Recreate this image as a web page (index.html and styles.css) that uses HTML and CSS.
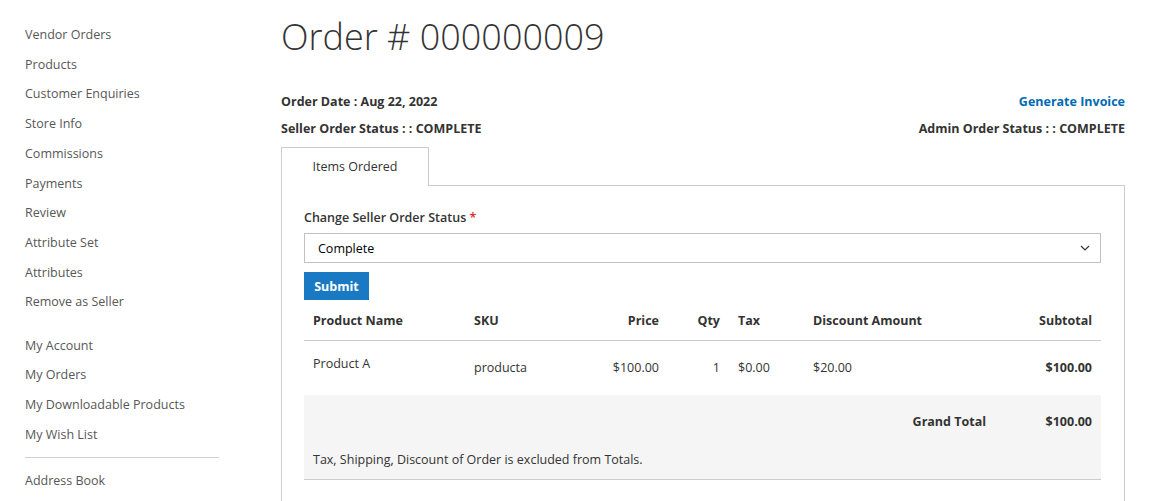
FILE: index.html
```html
<!DOCTYPE html>
<html>
<head>
<meta charset="utf-8">
<link rel="stylesheet" href="styles.css">
</head>
<body>
<div class="page">
  <aside class="sidebar">
    <ul class="nav">
      <li>Vendor Orders</li>
      <li>Products</li>
      <li>Customer Enquiries</li>
      <li>Store Info</li>
      <li>Commissions</li>
      <li>Payments</li>
      <li>Review</li>
      <li>Attribute Set</li>
      <li>Attributes</li>
      <li>Remove as Seller</li>
    </ul>
    <ul class="nav nav-second">
      <li>My Account</li>
      <li>My Orders</li>
      <li>My Downloadable Products</li>
      <li>My Wish List</li>
    </ul>
    <div class="nav-divider"></div>
    <ul class="nav nav-third">
      <li>Address Book</li>
    </ul>
  </aside>
  <main class="main">
    <h1 class="title">Order # 000000009</h1>
    <div class="meta">
      <div class="meta-row">
        <span class="meta-text">Order Date : Aug 22, 2022</span>
        <a class="invoice-link">Generate Invoice</a>
      </div>
      <div class="meta-row">
        <span class="meta-text">Seller Order Status : : COMPLETE</span>
        <span class="meta-text">Admin Order Status : : COMPLETE</span>
      </div>
    </div>
    <div class="tabs">
      <div class="tab">Items Ordered</div>
    </div>
    <div class="tab-content">
      <div class="field-label">Change Seller Order Status <span class="req">*</span></div>
      <div class="select">
        <span>Complete</span>
        <svg class="chev" width="10" height="6" viewBox="0 0 10 6"><path d="M1 1 L5 5 L9 1" fill="none" stroke="#333" stroke-width="1.2"/></svg>
      </div>
      <button class="submit">Submit</button>
      <table class="items">
        <colgroup>
          <col class="c1"><col class="c2"><col class="c3"><col class="c4"><col class="c5"><col class="c6"><col class="c7">
        </colgroup>
        <thead>
          <tr>
            <th>Product Name</th>
            <th>SKU</th>
            <th class="r">Price</th>
            <th class="r">Qty</th>
            <th>Tax</th>
            <th>Discount Amount</th>
            <th class="r">Subtotal</th>
          </tr>
        </thead>
        <tbody>
          <tr>
            <td class="pname">Product A</td>
            <td>producta</td>
            <td class="r">$100.00</td>
            <td class="r">1</td>
            <td>$0.00</td>
            <td>$20.00</td>
            <td class="r b">$100.00</td>
          </tr>
        </tbody>
        <tfoot>
          <tr class="grand">
            <td colspan="6" class="r b">Grand Total</td>
            <td class="r b">$100.00</td>
          </tr>
          <tr class="note">
            <td colspan="7">Tax, Shipping, Discount of Order is excluded from Totals.</td>
          </tr>
        </tfoot>
      </table>
    </div>
  </main>
</div>
</body>
</html>
```
FILE: styles.css
```css
html, body {
  margin: 0;
  padding: 0;
  background: #fff;
}
body {
  font-family: "Open Sans", "Liberation Sans", sans-serif;
  font-size: 12.5px;
  color: #333;
}
.page {
  display: flex;
  align-items: flex-start;
}
.sidebar {
  width: 281px;
  padding: 20px 0 0 25px;
  box-sizing: border-box;
  flex: none;
}
.nav {
  list-style: none;
  margin: 0;
  padding: 0;
}
.nav li {
  line-height: 29.7px;
  color: #575757;
  white-space: nowrap;
}
.nav-second {
  margin-top: 13.5px;
}
.nav-divider {
  width: 194px;
  border-top: 1px solid #d1d1d1;
  margin: 8px 0 8px;
}
.main {
  width: 844px;
  flex: none;
}
.title {
  margin: 17px 0 0;
  font-size: 36px;
  font-weight: 300;
  line-height: 40px;
  color: #333;
}
.meta {
  margin-top: 31px;
}
.meta-row {
  display: flex;
  justify-content: space-between;
  line-height: 27px;
  font-weight: 700;
}
.invoice-link {
  color: #006bb4;
  font-weight: 700;
}
.tabs {
  display: flex;
  margin-top: 5px;
}
.tab {
  width: 148px;
  box-sizing: border-box;
  height: 39px;
  border: 1px solid #ccc;
  border-bottom: none;
  text-align: center;
  line-height: 37px;
  background: #fff;
  position: relative;
  z-index: 1;
  margin-bottom: -1px;
}
.tab-content {
  border: 1px solid #ccc;
  border-bottom: none;
  padding: 22px 23px 40px 22px;
  min-height: 300px;
}
.field-label {
  line-height: 20px;
  font-weight: 600;
}
.req {
  color: #e02b27;
}
.select {
  margin-top: 5px;
  height: 30px;
  box-sizing: border-box;
  border: 1px solid #c2c2c2;
  display: flex;
  align-items: center;
  justify-content: space-between;
  padding: 0 10px 0 13px;
  color: #000;
}
.chev {
  display: block;
}
.submit {
  margin-top: 9px;
  height: 28px;
  width: 65px;
  padding: 0;
  border: none;
  background: #1979c3;
  color: #fff;
  font-family: inherit;
  font-size: 12.5px;
  font-weight: 700;
  display: block;
}
.items {
  width: 797px;
  border-collapse: collapse;
  table-layout: fixed;
}
.c1 { width: 161px; }
.c2 { width: 115px; }
.c3 { width: 88px; }
.c4 { width: 61px; }
.c5 { width: 75px; }
.c6 { width: 191px; }
.c7 { width: 106px; }
.items th, .items td {
  padding: 11px 9px;
  line-height: 18px;
  text-align: left;
  vertical-align: top;
  white-space: nowrap;
}
.items th {
  font-weight: 700;
  padding-top: 12px;
  padding-bottom: 10px;
  border-bottom: 1px solid #ccc;
}
.items tbody td {
  padding-top: 18px;
  padding-bottom: 18px;
}
.items tbody td.pname {
  padding-top: 14px;
}
.items .r {
  text-align: right;
}
.items .b {
  font-weight: 700;
}
.items tfoot {
  background: #f5f5f5;
}
.items tfoot .grand td {
  padding-top: 18px;
  padding-bottom: 10px;
}
.items tfoot .note td {
  padding-top: 10px;
  padding-bottom: 10px;
  border-bottom: 1px solid #ccc;
}
```
